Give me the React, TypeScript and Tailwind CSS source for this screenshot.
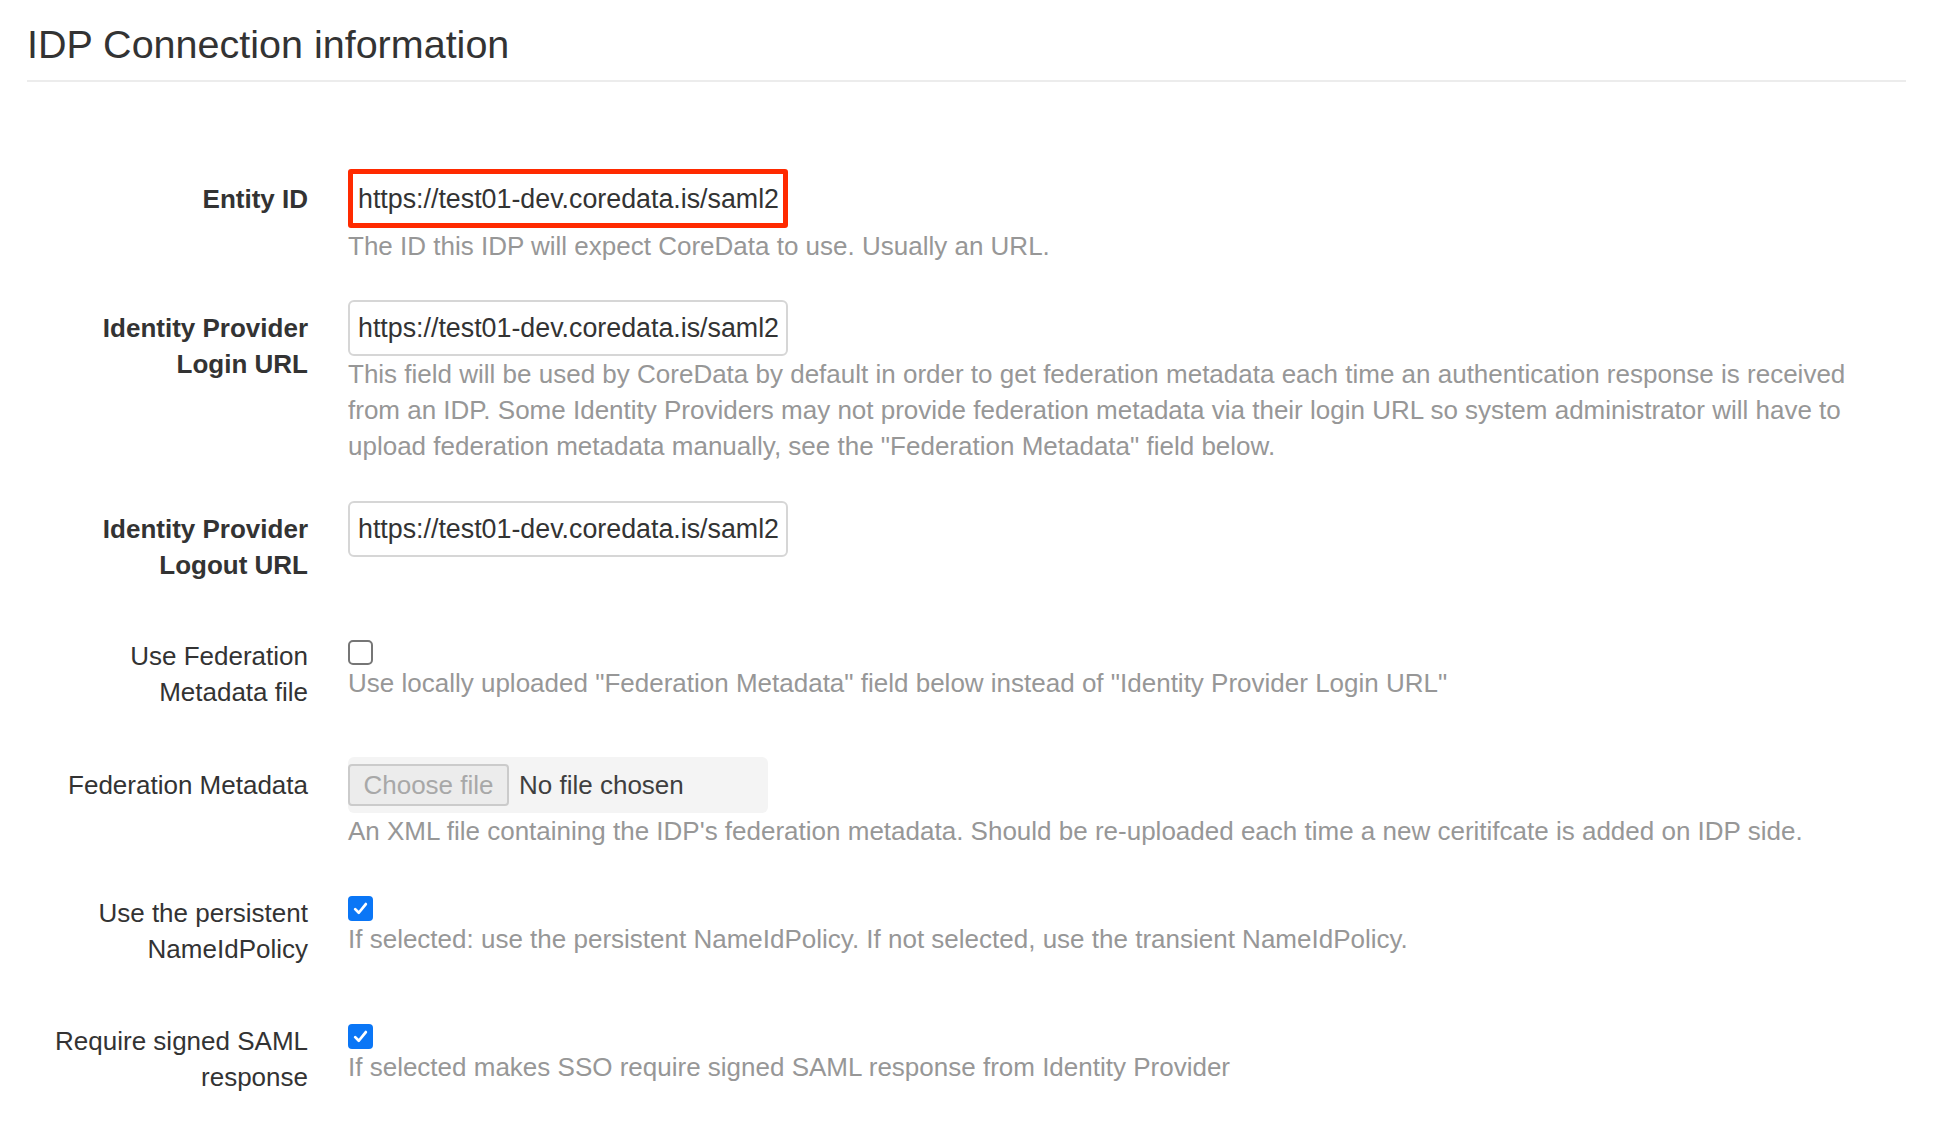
import React from 'react';

const font = { fontFamily: '"Liberation Sans", Arial, Helvetica, sans-serif' };

function Check({ checked }: { checked: boolean }) {
  if (!checked) {
    return <div className="w-[25px] h-[25px] rounded-[5px] border-2 border-[#767676] bg-white" />;
  }
  return (
    <div className="w-[25px] h-[25px] rounded-[4px] bg-[#0a76f6] flex items-center justify-center">
      <svg width="17" height="17" viewBox="0 0 16 16" fill="none">
        <path d="M3 8.6 L6.4 12 L13 3.8" stroke="white" strokeWidth="2.6" strokeLinecap="round" strokeLinejoin="round" />
      </svg>
    </div>
  );
}

function Row({
  label,
  bold,
  children,
  className,
  labelPad = 'pt-[10px]',
}: {
  label: React.ReactNode;
  bold?: boolean;
  children: React.ReactNode;
  className?: string;
  labelPad?: string;
}) {
  return (
    <div className={`flex ${className ?? ''}`}>
      <div
        className={`w-[281px] shrink-0 text-right text-[#333] ${labelPad} ${bold ? 'font-bold' : ''}`}
      >
        {label}
      </div>
      <div className="ml-[40px] flex-1 min-w-0">{children}</div>
    </div>
  );
}

function UrlInput({ highlight }: { highlight?: boolean }) {
  return (
    <div
      className={
        highlight
          ? 'w-[440px] h-[59px] border-[5px] border-[#ff2a00] rounded-[3px] flex items-center pl-[5px] text-[#333] text-[26.8px] whitespace-nowrap'
          : 'w-[440px] h-[56px] border-2 border-[#d6d6d6] rounded-[6px] flex items-center pl-[8px] text-[#333] text-[26.8px] whitespace-nowrap'
      }
    >
      https://test01-dev.coredata.is/saml2
    </div>
  );
}

function Help({ children }: { children: React.ReactNode }) {
  return <p className="max-w-[1530px] text-[#979797]">{children}</p>;
}

export default function App() {
  return (
    <div className="min-h-screen bg-white text-[26px] leading-[36px]" style={font}>
      <div className="pl-[27px] pr-[48px] pt-[16px]">
        <h1 className="text-[39.5px] leading-[56px] text-[#333] pb-[8px] border-b-2 border-[#ececec]">
          IDP Connection information
        </h1>

        <div className="pt-[87px]">
          <Row label="Entity ID" bold labelPad="pt-[12px]">
            <UrlInput highlight />
            <Help>The ID this IDP will expect CoreData to use. Usually an URL.</Help>
          </Row>

          <Row label={<>Identity Provider<br />Login URL</>} bold className="mt-[36px]">
            <UrlInput />
            <Help>
              This field will be used by CoreData by default in order to get federation metadata each time an
              authentication response is received from an IDP. Some Identity Providers may not provide federation
              metadata via their login URL so system administrator will have to upload federation metadata
              manually, see the "Federation Metadata" field below.
            </Help>
          </Row>

          <Row label={<>Identity Provider<br />Logout URL</>} bold className="mt-[37px]">
            <UrlInput />
          </Row>

          <Row label={<>Use Federation<br />Metadata file</>} labelPad="pt-0" className="mt-[55px]">
            <div className="pt-[2px]">
              <Check checked={false} />
            </div>
            <Help>Use locally uploaded "Federation Metadata" field below instead of "Identity Provider Login URL"</Help>
          </Row>

          <Row label="Federation Metadata" className="mt-[47px]">
            <div className="w-[420px] h-[56px] rounded-[6px] bg-[#f4f4f4] flex items-center">
              <div className="w-[161px] h-[42px] rounded-[4px] border-2 border-[#cbcbcb] bg-[#ececec] text-[#a8a8a8] flex items-center justify-center">
                Choose file
              </div>
              <span className="ml-[10px] text-[#3f3f3f]">No file chosen</span>
            </div>
            <Help>
              An XML file containing the IDP's federation metadata. Should be re-uploaded each time a new
              ceritifcate is added on IDP side.
            </Help>
          </Row>

          <Row label={<>Use the persistent<br />NameIdPolicy</>} labelPad="pt-0" className="mt-[46px]">
            <div className="pt-[1px]">
              <Check checked />
            </div>
            <Help>If selected: use the persistent NameIdPolicy. If not selected, use the transient NameIdPolicy.</Help>
          </Row>

          <Row label={<>Require signed SAML<br />response</>} labelPad="pt-0" className="mt-[56px]">
            <div className="pt-[1px]">
              <Check checked />
            </div>
            <Help>If selected makes SSO require signed SAML response from Identity Provider</Help>
          </Row>
        </div>
      </div>
    </div>
  );
}
